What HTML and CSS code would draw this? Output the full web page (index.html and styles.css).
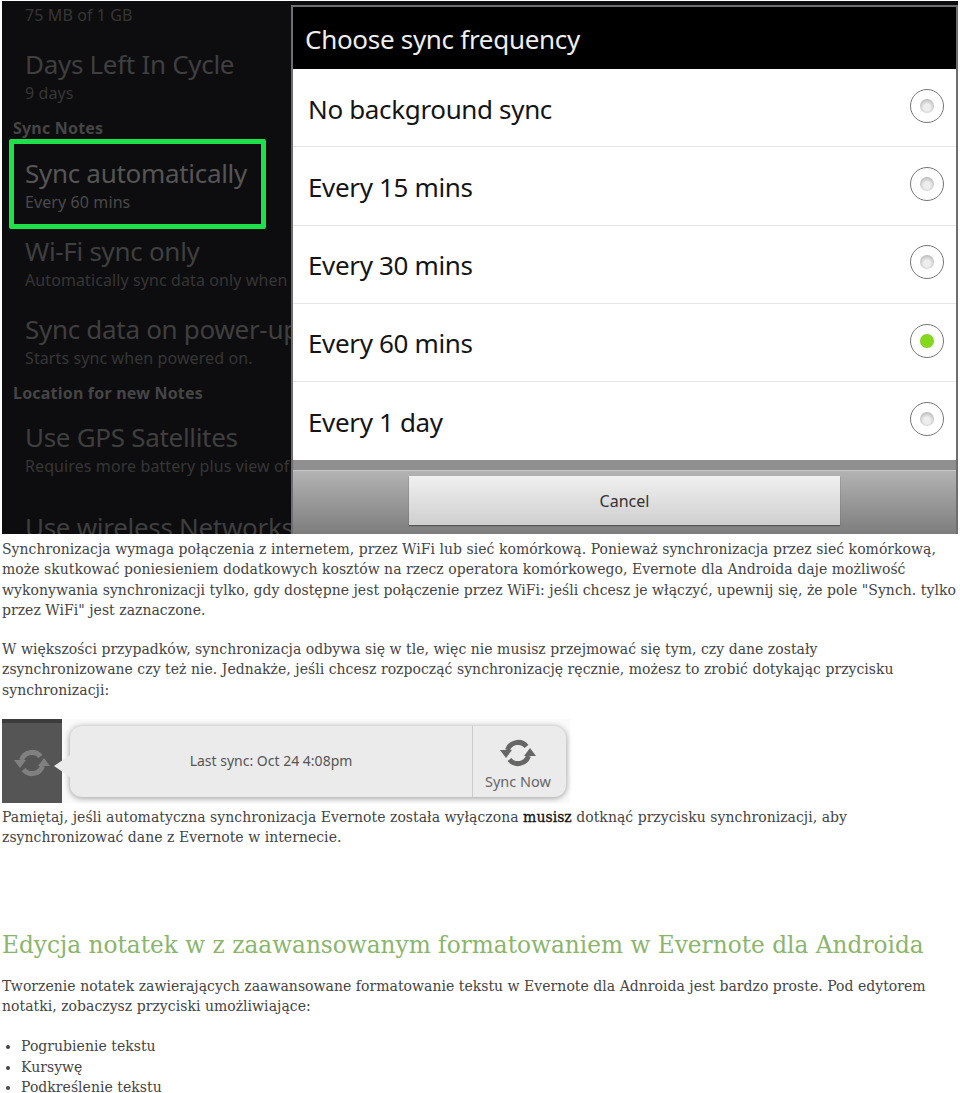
FILE: index.html
```html
<!DOCTYPE html>
<html lang="pl">
<head>
<meta charset="utf-8">
<title>Evernote dla Androida</title>
<link rel="stylesheet" href="styles.css">
</head>
<body>
<div class="shot">
  <div class="list">
    <div class="sub first">75 MB of 1 GB</div>
    <div class="item days"><div class="title">Days Left In Cycle</div><div class="sub">9 days</div></div>
    <div class="section sec1">Sync Notes</div>
    <div class="item sync"><div class="title hi">Sync automatically</div><div class="sub hi">Every 60 mins</div></div>
    <div class="item next"><div class="title">Wi-Fi sync only</div><div class="sub">Automatically sync data only when</div></div>
    <div class="item next"><div class="title">Sync data on power-up</div><div class="sub">Starts sync when powered on.</div></div>
    <div class="section sec2">Location for new Notes</div>
    <div class="item gps"><div class="title">Use GPS Satellites</div><div class="sub">Requires more battery plus view of</div></div>
    <div class="item wireless"><div class="title">Use wireless Networks</div></div>
  </div>
  <div class="highlight"></div>
  <div class="dialog">
    <div class="dialog-head">Choose sync frequency</div>
    <div class="opt"><span>No background sync</span><i class="radio"></i></div>
    <div class="opt"><span>Every 15 mins</span><i class="radio"></i></div>
    <div class="opt"><span>Every 30 mins</span><i class="radio"></i></div>
    <div class="opt"><span>Every 60 mins</span><i class="radio on"></i></div>
    <div class="opt"><span>Every 1 day</span><i class="radio"></i></div>
    <div class="dialog-foot"><div class="cancel">Cancel</div></div>
  </div>
</div>

<div class="text">
  <p>Synchronizacja wymaga połączenia z internetem, przez WiFi lub sieć komórkową. Ponieważ synchronizacja przez sieć komórkową, może skutkować poniesieniem dodatkowych kosztów na rzecz operatora komórkowego, Evernote dla Androida daje możliwość wykonywania synchronizacji tylko, gdy dostępne jest połączenie przez WiFi: jeśli chcesz je włączyć, upewnij się, że pole "Synch. tylko przez WiFi" jest zaznaczone.</p>
  <p>W większości przypadków, synchronizacja odbywa się w tle, więc nie musisz przejmować się tym, czy dane zostały<br>zsynchronizowane czy też nie. Jednakże, jeśli chcesz rozpocząć synchronizację ręcznie, możesz to zrobić dotykając przycisku<br>synchronizacji:</p>
</div>

<div class="strip">
  <div class="strip-dark">
    <svg class="sync-ico" viewBox="0 0 40 40"><use href="#sync"/></svg>
  </div>
  <div class="bubble">
    <div class="last">Last sync: Oct 24 4:08pm</div>
    <div class="now">
      <svg class="sync-ico" viewBox="0 0 40 40">
        <g id="sync" fill="none" stroke="currentColor" stroke-width="5">
          <path d="M28.5 13.5 A11 11 0 0 0 9.5 17"/>
          <path d="M11.5 26.5 A11 11 0 0 0 30.5 23"/>
          <path d="M2 17 L14 17 L8 25 Z" fill="currentColor" stroke="none"/>
          <path d="M26 23 L38 23 L32 15 Z" fill="currentColor" stroke="none"/>
        </g>
      </svg>
      <span>Sync Now</span>
    </div>
  </div>
</div>

<div class="text after-strip">
  <p>Pamiętaj, jeśli automatyczna synchronizacja Evernote została wyłączona <strong>musisz</strong> dotknąć przycisku synchronizacji, aby zsynchronizować dane z Evernote w internecie.</p>
</div>

<h2>Edycja notatek w z zaawansowanym formatowaniem w Evernote dla Androida</h2>

<div class="text closing">
  <p>Tworzenie notatek zawierających zaawansowane formatowanie tekstu w Evernote dla Adnroida jest bardzo proste. Pod edytorem notatki, zobaczysz przyciski umożliwiające:</p>
  <ul>
    <li>Pogrubienie tekstu</li>
    <li>Kursywę</li>
    <li>Podkreślenie tekstu</li>
  </ul>
</div>
</body>
</html>
```
FILE: styles.css
```css
html, body { margin: 0; padding: 0; background: #fff; }
body {
  height: 1093px;
  overflow: hidden;
  font-family: "DejaVu Serif", serif;
  font-size: 14px;
  line-height: 20.3px;
  color: #444;
}

.shot {
  position: relative;
  width: 956px;
  height: 533px;
  margin: 1px 0 0 2px;
  background: #0d0d0f;
  overflow: hidden;
  font-family: "Noto Sans", "DejaVu Sans", sans-serif;
}
.list { padding-left: 23px; color: #3f3f3f; white-space: nowrap; width: 266px; }
.title { height: 34px; line-height: 32px; font-size: 26px; letter-spacing: -0.3px; }
.sub { height: 22px; line-height: 22px; font-size: 16px; letter-spacing: 0.1px; color: #363636; }
.sub.first { height: 28px; line-height: 28px; }
.item.days { margin-top: 19px; }
.section { height: 24px; line-height: 24px; margin-left: -12px; font-size: 16px; letter-spacing: 0.2px; font-weight: 700; color: #454545; }
.sec1 { margin-top: 12px; margin-bottom: 17px; }
.sec2 { margin-top: 12px; margin-bottom: 16px; }
.item.next { margin-top: 22px; }
.item.wireless { margin-top: 34px; }
.hi { color: #555; }
.sub.hi { color: #4a4a4a; }

.highlight {
  position: absolute;
  left: 7px;
  top: 138px;
  width: 247px;
  height: 80px;
  border: 5px solid #1ee04a;
  border-radius: 2px;
}

.dialog {
  position: absolute;
  left: 289px;
  top: 4px;
  right: 0;
  bottom: 0;
  border: 2px solid #6e6e6e;
  border-bottom: 0;
  display: flex;
  flex-direction: column;
  background: #fff;
}
.dialog-head {
  height: 62px;
  line-height: 64px;
  padding-left: 12px;
  flex: none;
  background: #000;
  color: #eee;
  font-size: 26px;
  letter-spacing: -0.3px;
}
.opt {
  height: 78.3px;
  box-sizing: border-box;
  flex: none;
  display: flex;
  align-items: center;
  justify-content: space-between;
  padding: 0 12px 0 15px;
  color: #151515;
  font-size: 26px;
  letter-spacing: -0.35px;
  border-bottom: 1px solid #e6e6e6;
}
.opt span { padding-top: 2px; }
.opt:nth-child(6) { border-bottom: 0; }
.radio {
  width: 34px;
  height: 34px;
  box-sizing: border-box;
  border: 1.5px solid #777;
  border-radius: 50%;
  display: flex;
  align-items: center;
  justify-content: center;
  margin-top: -4px;
}
.radio::after {
  content: "";
  width: 14px;
  height: 14px;
  border-radius: 50%;
  background: radial-gradient(circle at 50% 60%, #eee 30%, #bbb 75%, #888);
}
.radio.on::after { background: radial-gradient(circle, #86d81e 60%, #6a9a3a); }
.dialog-foot {
  flex: 1;
  box-sizing: border-box;
  border-top: 10px solid #8f8f8f;
  background: linear-gradient(#b4b4b4, #7d7d7d);
  box-shadow: inset 0 1px 0 #c9c9c9;
  padding-top: 6px;
  display: flex;
  justify-content: center;
}
.cancel {
  width: 431px;
  height: 49px;
  line-height: 50px;
  text-align: center;
  font-size: 16px;
  color: #333;
  background: linear-gradient(#f0f0f0, #cfcfcf);
  box-shadow: 0 1px 1px #555;
}

.text { margin-left: 2px; width: 956px; letter-spacing: 0.03px; }
.text p { margin: 0 0 19px; }
.shot + .text { margin-top: 5px; }
.text strong { color: #111; font-weight: 400; -webkit-text-stroke: 0.3px #111; }

.strip {
  display: flex;
  align-items: center;
  width: 568px;
  height: 84px;
  margin: 3px 0 4px 2px;
  background: #fafafa;
  font-family: "Noto Sans", sans-serif;
  color: #555;
  position: relative;
}
.strip-dark {
  width: 60px;
  height: 84px;
  flex: none;
  background: #555;
  border-top: 4px solid #3c3c3c;
  box-sizing: border-box;
  display: flex;
  align-items: center;
  padding-left: 10px;
  color: #808080;
}
.bubble {
  position: relative;
  margin-left: 8px;
  width: 496px;
  height: 71px;
  display: flex;
  align-items: center;
  background: #ebebeb;
  border-radius: 12px;
  box-shadow: 0 1px 6px rgba(0,0,0,.4);
}
.bubble::before {
  content: "";
  position: absolute;
  left: -16px;
  top: 29px;
  border: 11px solid transparent;
  border-left: 0;
  border-right: 16px solid #ebebeb;
}
.last { flex: 1; text-align: center; font-size: 14px; }
.now {
  width: 94px;
  height: 71px;
  box-sizing: border-box;
  border-left: 1px solid #ccc;
  display: flex;
  flex-direction: column;
  align-items: center;
  justify-content: center;
  padding-right: 3px;
  color: #666;
  font-size: 14.5px;
  line-height: 16px;
}
.sync-ico { width: 40px; height: 40px; display: block; }

.text.after-strip p { margin: 0; }
h2 {
  margin: 82px 0 16px 2px;
  font-weight: 400;
  font-size: 23.25px;
  line-height: 30px;
  color: #8ab56b;
  white-space: nowrap;
}
.closing p { margin-bottom: 20px; }
ul { margin: 0; padding-left: 19px; }
```
